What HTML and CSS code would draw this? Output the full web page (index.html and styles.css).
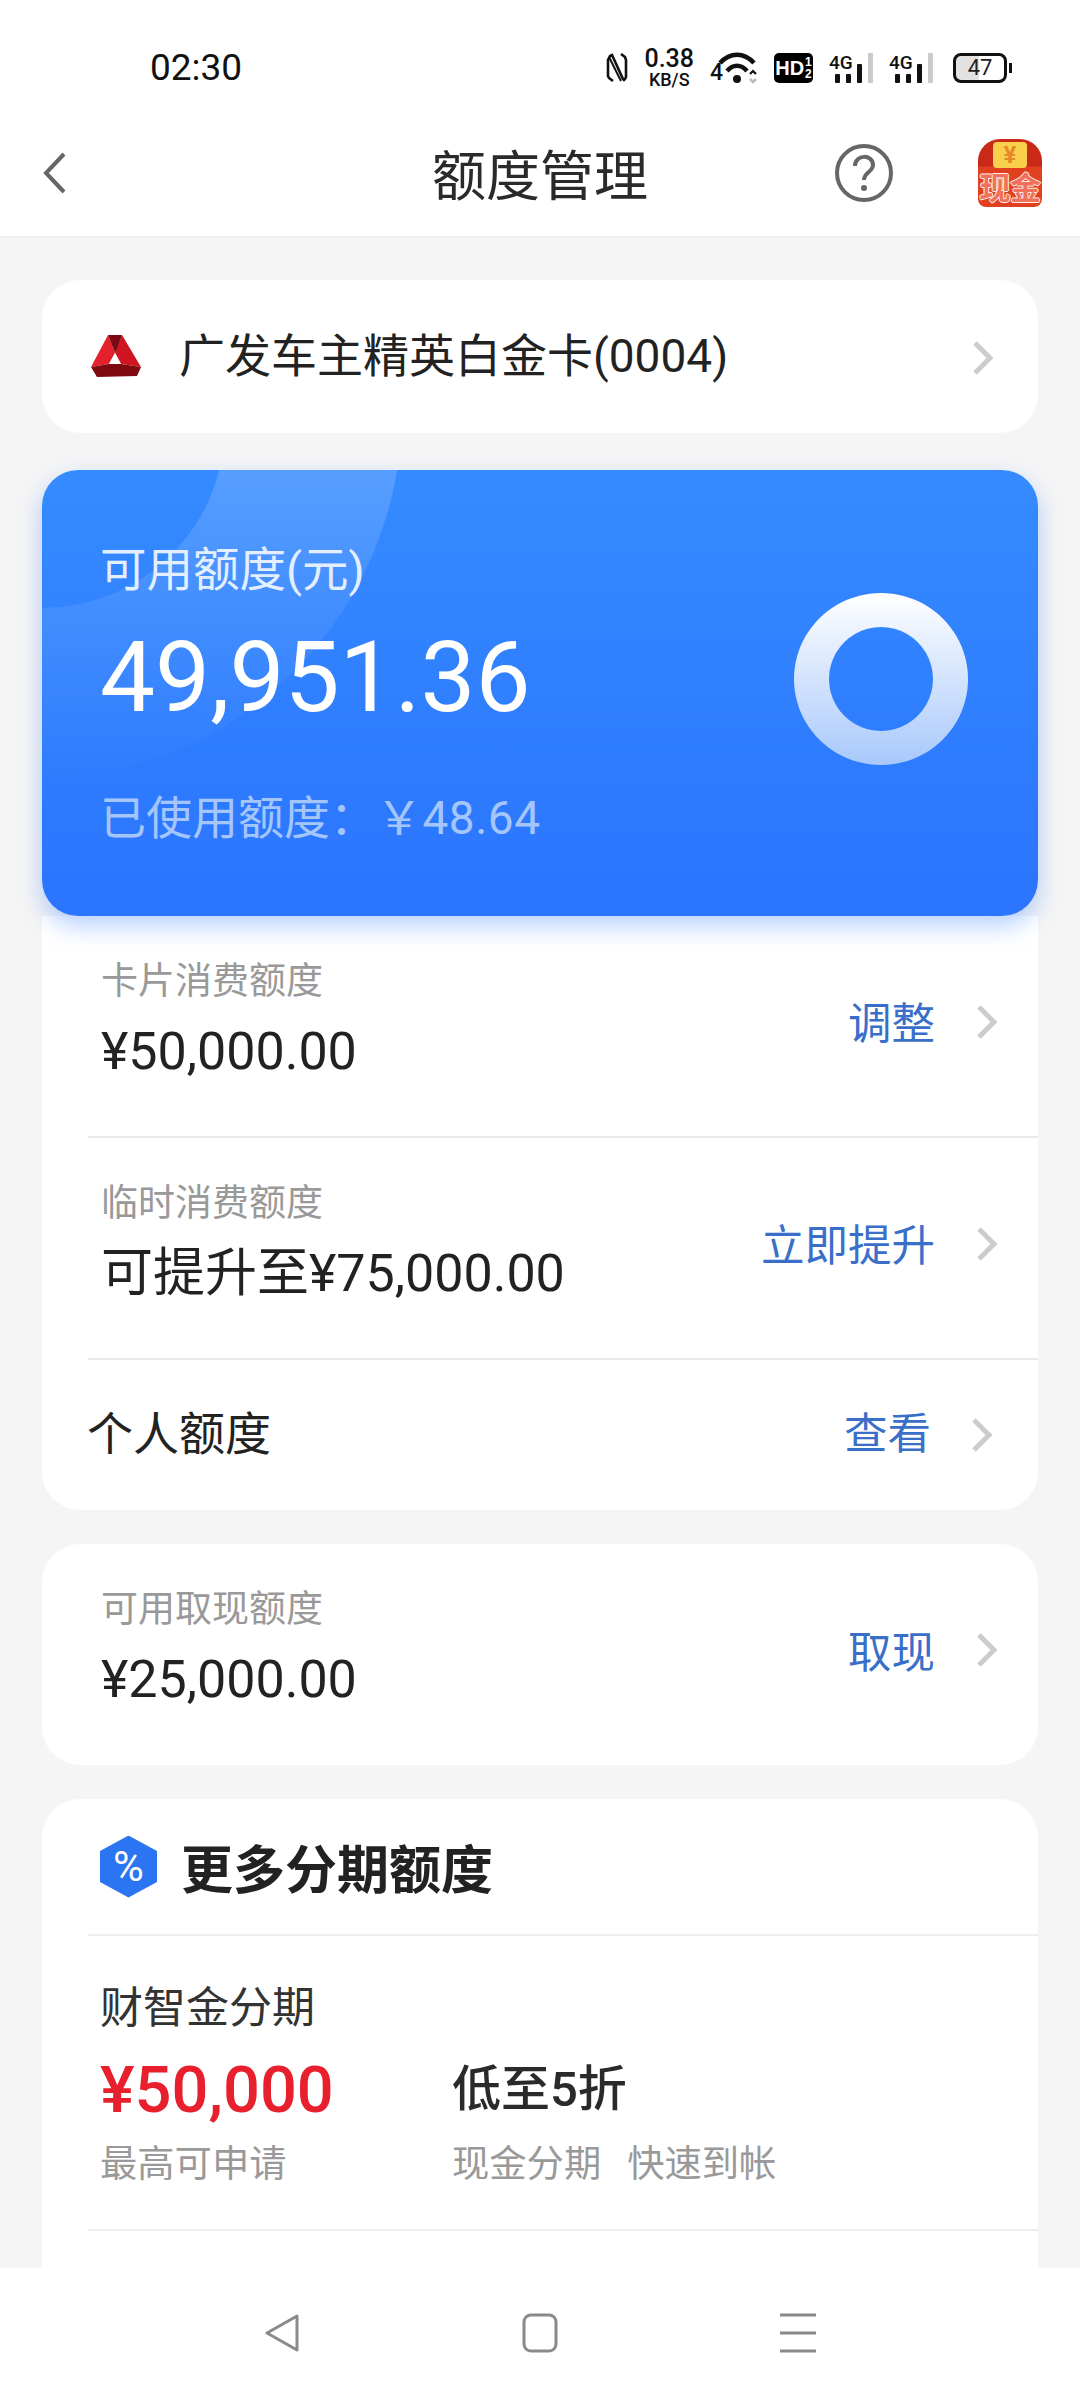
FILE: index.html
```html
<!doctype html>
<html lang="zh-CN">
 <head>
  <meta charset="UTF-8">
  <title>额度管理</title>
  <link rel="stylesheet" href="styles.css">
 </head>
 <body>
 <div class="page">
  <!--状态栏-->
  <div class="status">
   <span class="s_time">02:30</span>
   <div class="s_icons">
    <svg width="22" height="30" viewBox="0 0 22 30" class="i_nfc"><path d="M7 28 3 25 2 23V7l2-4 2-1 11 24 1 1 1-1 1-2V7l-1-3-4-3" fill="none" stroke="#111" stroke-width="2.6"/><path d="M3 4 15 28" fill="none" stroke="#111" stroke-width="2"/></svg>
    <div class="s_speed"><b>0.38</b><span>KB/S</span></div>
    <div class="s_wifi">
     <span>4</span>
     <svg width="42" height="32" viewBox="0 0 42 32">
      <path d="M3 11C13 0 27 0 37 11" fill="none" stroke="#111" stroke-width="4.5"/>
      <path d="M10 19C16 12 24 12 30 19" fill="none" stroke="#111" stroke-width="4.5"/>
      <circle cx="20" cy="27" r="4" fill="#111"/>
      <path d="M33 22l3-3 3 3" fill="none" stroke="#111" stroke-width="2.2"/>
      <path d="M33 27l3 3 3-3" fill="none" stroke="#bbb" stroke-width="2.6"/>
     </svg>
    </div>
    <div class="s_hd"><span class="hd_t">HD</span><span class="hd_n"><i>1</i><i>2</i></span></div>
    <div class="sig">
     <div class="sig_col"><span>4G</span><div class="sig_bars"><i class="b1"></i><i class="b1"></i><i class="b2"></i></div></div>
     <em></em>
    </div>
    <div class="sig">
     <div class="sig_col"><span>4G</span><div class="sig_bars"><i class="b1"></i><i class="b1"></i><i class="b2"></i></div></div>
     <em></em>
    </div>
    <div class="s_bat"><div class="s_bat_box">47</div><i></i></div>
   </div>
  </div>
  <!--标题栏-->
  <div class="head">
   <svg width="26" height="44" viewBox="0 0 26 44" class="i_back"><path d="M22 3 4 22l18 19" fill="none" stroke="#666" stroke-width="4"/></svg>
   <h1>额度管理</h1>
   <svg width="60" height="60" viewBox="0 0 60 60" class="i_help">
    <circle cx="30" cy="30" r="27" fill="none" stroke="#666" stroke-width="4"/>
    <path d="M21 23c0-12 18-12 18-1 0 7-9 7-9 15" fill="none" stroke="#666" stroke-width="4"/>
    <circle cx="30" cy="45" r="3" fill="#666"/>
   </svg>
   <div class="cash">
    <div class="cash_top"><span>¥</span></div>
    <div class="cash_txt">现金</div>
   </div>
  </div>
  <!--内容-->
  <div class="main">
   <div class="card c_bank">
    <svg width="50" height="43" viewBox="0 0 50 43" class="i_bank">
     <path d="M17 0 0 32l18-3 6-11z" fill="#e3202b"/>
     <path d="M31 0 50 32l-20-3-6-11z" fill="#d01522"/>
     <path d="M17 0h14l-5 14-2 4z" fill="#7c0a12"/>
     <path d="M18 29h12l20 3-4 9-40 1-6-10z" fill="#7e0a10"/>
     <path d="M24 18l6 11H18z" fill="#fff"/>
    </svg>
    <span class="bank_name">广发车主精英白金卡(0004)</span>
    <svg class="arrow a_low" width="22" height="36" viewBox="0 0 22 36"><path d="M3 3l15 15L3 33" fill="none" stroke="#ccc" stroke-width="5"/></svg>
   </div>
   <div class="blue">
    <svg class="b_deco" width="996" height="446" viewBox="0 0 996 446">
     <defs><linearGradient id="band" gradientUnits="userSpaceOnUse" x1="0" y1="0" x2="0" y2="320"><stop offset="0" stop-color="#fff" stop-opacity=".17"/><stop offset=".5" stop-color="#fff" stop-opacity=".07"/><stop offset="1" stop-color="#fff" stop-opacity="0"/></linearGradient></defs>
     <path fill="url(#band)" fill-rule="evenodd" d="M-380-60a370 370 0 1 0 740 0a370 370 0 1 0-740 0zM-183-45a183 183 0 1 0 366 0a183 183 0 1 0-366 0z"/>
    </svg>
    <div class="b_left">
     <div class="b_tit">可用额度(元)</div>
     <div class="b_num">49,951.36</div>
     <div class="b_used">已使用额度：<span>￥48.64</span></div>
    </div>
    <svg width="174" height="172" viewBox="0 0 174 172" class="i_ring">
     <defs><linearGradient id="ring" x1="0" y1="0" x2="0" y2="1"><stop offset="0" stop-color="#fff"/><stop offset="1" stop-color="#a8c8fb"/></linearGradient></defs>
     <path fill-rule="evenodd" fill="url(#ring)" d="M87 0a87 86 0 1 0 .01 0zM87 34a52 52 0 1 1-.01 0z"/>
    </svg>
   </div>
   <div class="card c_list">
    <div class="row">
     <div class="r_left"><div class="r_label">卡片消费额度</div><div class="r_val">¥50,000.00</div></div>
     <a class="r_link">调整</a>
     <svg class="arrow" width="22" height="36" viewBox="0 0 22 36"><path d="M3 3l15 15L3 33" fill="none" stroke="#ccc" stroke-width="5"/></svg>
    </div>
    <div class="row">
     <div class="r_left"><div class="r_label">临时消费额度</div><div class="r_val">可提升至¥75,000.00</div></div>
     <a class="r_link">立即提升</a>
     <svg class="arrow" width="22" height="36" viewBox="0 0 22 36"><path d="M3 3l15 15L3 33" fill="none" stroke="#ccc" stroke-width="5"/></svg>
    </div>
    <div class="row r_single">
     <div class="r_name">个人额度</div>
     <a class="r_link">查看</a>
     <svg class="arrow" width="22" height="36" viewBox="0 0 22 36"><path d="M3 3l15 15L3 33" fill="none" stroke="#ccc" stroke-width="5"/></svg>
    </div>
   </div>
   <div class="card c_cash">
    <div class="r_left"><div class="r_label">可用取现额度</div><div class="r_val">¥25,000.00</div></div>
    <a class="r_link">取现</a>
    <svg class="arrow" width="22" height="36" viewBox="0 0 22 36"><path d="M3 3l15 15L3 33" fill="none" stroke="#ccc" stroke-width="5"/></svg>
   </div>
   <div class="card c_more">
    <div class="m_head">
     <div class="m_badge">%</div>
     <h2>更多分期额度</h2>
    </div>
    <div class="m_item">
     <div class="m_name">财智金分期</div>
     <div class="m_grid">
      <div class="m_money">¥50,000</div>
      <div class="m_rate">低至5折</div>
      <div class="m_note">最高可申请</div>
      <div class="m_note m_tags"><span>现金分期</span><span>快速到帐</span></div>
     </div>
    </div>
   </div>
  </div>
  <!--底部导航-->
  <div class="nav">
   <svg width="36" height="40" viewBox="0 0 36 40"><path d="M33 3 3 20l30 17z" fill="none" stroke="#8a8a8a" stroke-width="3" stroke-linejoin="round"/></svg>
   <svg width="36" height="40" viewBox="0 0 36 40"><rect x="2" y="2" width="32" height="36" rx="7" fill="none" stroke="#8a8a8a" stroke-width="3"/></svg>
   <svg width="36" height="40" viewBox="0 0 36 40"><path d="M0 2h36M0 20h36M0 38h36" fill="none" stroke="#8a8a8a" stroke-width="3"/></svg>
  </div>
 </div>
 </body>
</html>
```
FILE: styles.css
```css
*{padding:0;margin:0;box-sizing:border-box;}
body{width:1080px;height:2400px;overflow:hidden;background:#fff;font-family:Roboto,"Noto Sans CJK SC",sans-serif;color:#222;}
h1,h2{font-weight:normal;}
i,em{font-style:normal;}
.page{width:1080px;height:2400px;display:flex;flex-direction:column;}

.status{height:120px;flex:none;display:flex;justify-content:space-between;align-items:center;padding:16px 68px 0 150px;}
.s_time{font-size:37px;color:#111;margin-top:-2px;}
.s_icons{display:flex;align-items:center;gap:16px;}
.s_speed{display:flex;flex-direction:column;align-items:center;color:#111;}
.s_speed b{font-size:25px;font-weight:500;line-height:23px;}
.s_speed span{font-size:18px;font-weight:500;line-height:19px;}
.s_wifi{display:flex;align-items:flex-end;width:48px;height:32px;}
.s_wifi span{font-size:23px;font-weight:500;line-height:22px;color:#111;width:10px;flex:none;}
.s_wifi svg{flex:none;margin-left:-3px;}
.s_hd{width:39px;height:30px;background:#000;border-radius:5px;color:#fff;font-family:"Liberation Sans Narrow","Liberation Sans",sans-serif;font-weight:700;display:flex;justify-content:center;align-items:center;gap:1px;}
.hd_t{font-size:20px;line-height:30px;}
.hd_n{display:flex;flex-direction:column;font-size:12px;line-height:12px;}
.sig{width:44px;height:30px;display:flex;justify-content:space-between;}
.sig_col{display:flex;flex-direction:column;width:36px;}
.sig_col span{font-size:19px;line-height:20px;font-weight:500;color:#111;font-family:"Liberation Sans Narrow",Roboto,sans-serif;}
.sig_bars{height:10px;display:flex;align-items:flex-end;gap:6px;padding-left:6px;}
.sig_bars i{display:block;width:5px;background:#111;border-radius:1px;}
.sig_bars .b1{height:9px;}
.sig_bars .b2{height:19px;}
.sig em{display:block;width:5px;height:30px;background:#ccc;}
.s_bat{display:flex;align-items:center;gap:2px;margin-left:4px;}
.s_bat_box{width:54px;height:30px;border:3px solid #111;border-radius:8px;background:linear-gradient(90deg,#e2e2e2 47%,#fff 47%);font-size:22px;line-height:24px;text-align:center;color:#222;}
.s_bat i{display:block;width:3px;height:10px;background:#111;}

.head{height:118px;flex:none;display:flex;align-items:center;padding:0 38px 10px 42px;border-bottom:2px solid #f0f0f0;}
.head h1{font-size:54px;flex:1;text-align:center;color:#2a2a2a;padding-left:178px;padding-bottom:2px;}
.i_help{margin-right:84px;}
.cash{width:64px;height:68px;background:linear-gradient(180deg,#c92a17 40%,#e1401f 41%);border-radius:22px 22px 8px 8px;display:flex;flex-direction:column;align-items:center;}
.cash_top{width:34px;height:26px;background:#f9d04c;border-radius:4px;margin-top:3px;color:#e8872a;font-size:24px;font-weight:700;line-height:26px;text-align:center;}
.cash_txt{font-size:31px;line-height:36px;color:#f0705c;font-weight:700;white-space:nowrap;width:64px;text-align:center;letter-spacing:-0.5px;margin-top:3px;text-shadow:1px 0 #fff0ec,-1px 0 #fff0ec,0 1px #fff0ec,0 -1px #fff0ec;}

.main{flex:1;background:#f5f5f5;padding:42px 42px 0;overflow:hidden;display:flex;flex-direction:column;}
.card{background:#fff;border-radius:38px;flex:none;}
.arrow{flex:none;}
.a_low{margin-top:3px;}

.c_bank{height:153px;display:flex;align-items:center;padding:0 44px 0 49px;}
.i_bank{flex:none;}
.bank_name{flex:1;font-size:46px;padding-left:38px;padding-bottom:9px;color:#222;}

.blue{position:relative;z-index:1;height:446px;margin-top:37px;flex:none;border-radius:36px;padding:67px 70px 0 58px;display:flex;justify-content:space-between;color:#fff;box-shadow:0 10px 24px rgba(50,120,255,.35);background:linear-gradient(180deg,#358bff,#2b74fe);}
.b_deco{position:absolute;left:0;top:0;}
.b_left{position:relative;}
.b_tit{font-size:46.5px;line-height:66px;color:#e3eeff;}
.b_num{font-size:98px;line-height:114px;margin-top:18px;}
.b_used{font-size:46px;line-height:66px;margin-top:50px;color:#a4c6fb;}
.b_used span{font-family:Roboto,sans-serif;letter-spacing:.5px;}
.i_ring{position:relative;margin-top:56px;}

.c_list{border-radius:0 0 38px 38px;}
.row{display:flex;align-items:center;margin-left:46px;padding:0 40px 8px 13px;height:222px;border-bottom:2px solid #e9e9e9;}
.r_left{flex:1;}
.r_label{font-size:37px;line-height:50px;color:#999;}
.r_val{font-size:52px;line-height:70px;color:#222;margin-top:10px;}
.r_link{font-size:43.5px;color:#3a6fc9;margin-right:41px;}
.row .r_link{margin-bottom:4px;}
.r_single{height:150px;padding-left:0;border-bottom:none;padding-right:45px;}
.r_single .r_link{margin:0 40px 2px 0;}
.r_single .arrow{margin-top:8px;}
.r_name{flex:1;font-size:46px;color:#222;margin:0 0 3px -1px;}

.c_cash{height:221px;margin-top:34px;display:flex;align-items:center;padding:0 40px 10px 59px;}

.c_more{margin-top:34px;height:600px;}
.m_head{height:137px;margin-left:46px;border-bottom:2px solid #eee;display:flex;align-items:center;gap:24px;padding-left:12px;}
.m_badge{width:57px;height:62px;background:#2b74f2;clip-path:polygon(50% 0,100% 25%,100% 75%,50% 100%,0 75%,0 25%);color:#fff;font-size:42px;font-weight:400;line-height:62px;text-align:center;}
.m_head h2{font-size:52px;font-weight:700;color:#222;}
.m_item{margin-left:46px;padding:42px 0 0 12px;height:295px;border-bottom:2px solid #eee;}
.m_name{font-size:43px;line-height:60px;color:#333;}
.m_grid{display:grid;grid-template-columns:352px 1fr;align-items:center;margin-top:10px;}
.m_money{font-size:65px;font-weight:500;line-height:84px;color:#e8202e;}
.m_rate{font-size:49px;font-weight:500;color:#2a2a2a;padding-bottom:12px;}
.m_note{font-size:37.3px;line-height:58px;color:#999;margin-top:3px;}
.m_tags{display:flex;gap:26px;}

.nav{height:132px;flex:none;background:#fff;display:flex;justify-content:center;gap:222px;align-items:center;padding-bottom:2px;}
```
